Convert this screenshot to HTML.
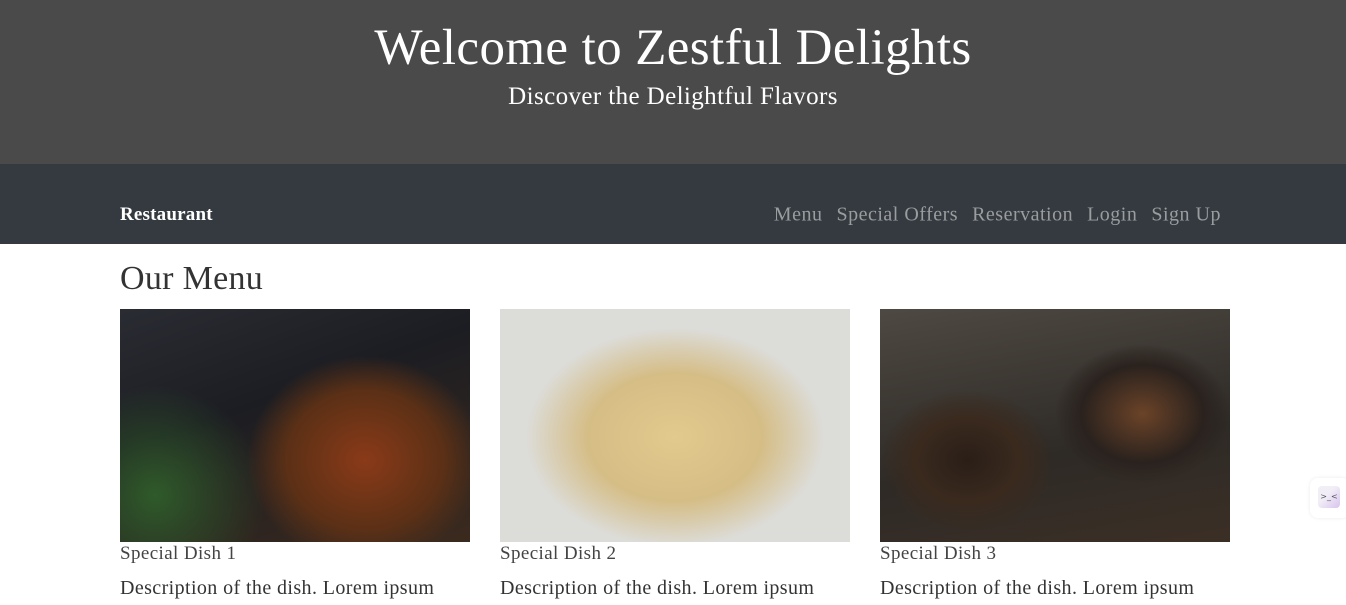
<!DOCTYPE html>
<html><head><style>
*{margin:0;padding:0;box-sizing:border-box}
body{width:1346px;height:605px;overflow:hidden;background:#fff;font-family:"Liberation Serif",serif;color:#333}
.hdr{height:164px;background:#4a4a4a;color:#fff;text-align:center}
.hdr h1{font-weight:normal;font-size:51px;padding-top:20px;line-height:56px;letter-spacing:0.4px}
.hdr p{font-size:25px;margin-top:7px;letter-spacing:0.4px}
.nav{height:80px;background:#343a40;position:relative}
.nav .brand{position:absolute;left:120px;top:51px;color:#fff;font-size:19px;font-weight:bold;transform:translateY(-50%);letter-spacing:0.2px}
.links{position:absolute;right:125px;top:51px;transform:translateY(-50%);font-size:20px;color:#9a9d9f;letter-spacing:0.5px;white-space:nowrap}
.links span{margin-left:14px}
h2{position:absolute;left:120px;top:260px;font-weight:normal;font-size:34px;color:#333;letter-spacing:0.3px}
.card{position:absolute;top:309px;width:350px}
.img{height:233px}
.t{font-size:19px;margin-top:1px;color:#444;letter-spacing:0.4px}
.d{font-size:20px;margin-top:12px;color:#333;letter-spacing:0.4px;white-space:nowrap}
.w{position:absolute;left:1310px;top:478px;width:40px;height:40px;background:#fff;border-radius:8px;box-shadow:0 0 4px rgba(0,0,0,.08)}
.w div{position:absolute;left:8px;top:8px;width:22px;height:22px;border-radius:4px;background:linear-gradient(135deg,#f1eef6 40%,#d8c3ee);font-size:8px;color:#556;text-align:center;line-height:22px;font-family:"DejaVu Sans",sans-serif}
</style></head><body>
<div class="hdr"><h1>Welcome to Zestful Delights</h1><p>Discover the Delightful Flavors</p></div>
<div class="nav"><div class="brand">Restaurant</div><div class="links"><span>Menu</span><span>Special Offers</span><span>Reservation</span><span>Login</span><span>Sign Up</span></div></div>
<h2>Our Menu</h2>
<div class="card" style="left:120px"><div class="img" style="background:radial-gradient(ellipse 45% 60% at 70% 65%,#8a3a18 0%,#5b3016 50%,transparent 75%),radial-gradient(circle at 10% 80%,#2f5a2a 0%,transparent 30%),linear-gradient(160deg,#2a2c33 0%,#1c1d22 40%,#3b2a1e 100%)"></div><div class="t">Special Dish 1</div><div class="d">Description of the dish. Lorem ipsum</div></div>
<div class="card" style="left:500px"><div class="img" style="background:radial-gradient(ellipse 50% 55% at 50% 55%,#e2c98c 0%,#d5bd86 50%,#dcdcd8 85%),#d8dcdc"></div><div class="t">Special Dish 2</div><div class="d">Description of the dish. Lorem ipsum</div></div>
<div class="card" style="left:880px"><div class="img" style="background:radial-gradient(ellipse 25% 30% at 25% 65%,#2a1e18 0%,#3a2a1e 60%,transparent 100%),radial-gradient(ellipse 25% 30% at 75% 45%,#6b4328 0%,#2a221e 70%,transparent 100%),linear-gradient(170deg,#4e4942 0%,#2e2a26 60%,#3b2f25 100%)"></div><div class="t">Special Dish 3</div><div class="d">Description of the dish. Lorem ipsum</div></div>
<div class="w"><div>&gt;_&lt;</div></div>
</body></html>
